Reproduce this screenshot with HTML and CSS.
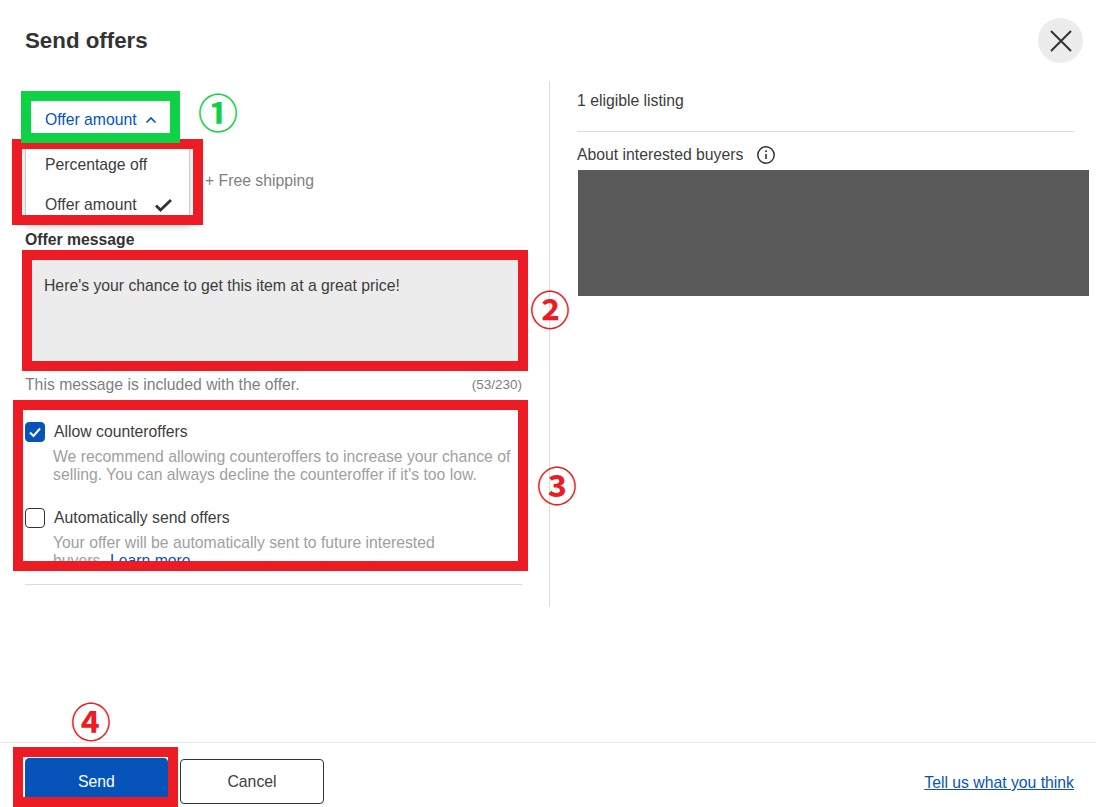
FILE: index.html
```html
<!DOCTYPE html>
<html lang="en">
<head>
<meta charset="utf-8">
<title>Send offers</title>
<link rel="stylesheet" href="styles.css">
</head>
<body>
<div class="modal">
  <header class="head">
    <h1 class="title">Send offers</h1>
    <button class="close" aria-label="Close">
      <svg width="22" height="22" viewBox="0 0 22 22"><path d="M1 1l20 20M21 1L1 21" fill="none" stroke="#333" stroke-width="2"/></svg>
    </button>
  </header>
  <main class="body">
    <section class="left">
      <button class="type-btn">Offer amount
        <svg class="chev" width="12" height="8" viewBox="0 0 12 8"><path d="M1.500 6.500L6 2l4.500 4.500" fill="none" stroke="#0654ba" stroke-width="1.600"/></svg>
      </button>
      <div class="price-row"><span class="ship">+ Free shipping</span></div>
      <label class="msg-label">Offer message</label>
      <div class="msg">Here's your chance to get this item at a great price!</div>
      <div class="msg-foot"><span>This message is included with the offer.</span><span class="count">(53/230)</span></div>
      <div class="opt">
        <span class="box on"><svg width="14" height="12" viewBox="0 0 14 12"><path d="M2 6.500l3.500 3.500L12 2.500" fill="none" stroke="#fff" stroke-width="2"/></svg></span>
        <div class="opt-text">
          <div class="opt-title">Allow counteroffers</div>
          <p class="opt-desc">We recommend allowing counteroffers to increase your chance of selling. You can always decline the counteroffer if it's too low.</p>
        </div>
      </div>
      <div class="opt">
        <span class="box"></span>
        <div class="opt-text">
          <div class="opt-title">Automatically send offers</div>
          <p class="opt-desc narrow">Your offer will be automatically sent to future interested buyers. <a class="link plain" href="#">Learn more</a></p>
        </div>
      </div>
      <hr class="rule left-rule">
    </section>
    <aside class="right">
      <div class="elig">1 eligible listing</div>
      <hr class="rule">
      <div class="about">About interested buyers
        <svg class="info" width="20" height="20" viewBox="0 0 20 20"><circle cx="10" cy="10" r="8.200" fill="none" stroke="#333" stroke-width="1.500"/><path d="M10 9v5" stroke="#333" stroke-width="1.600"/><circle cx="10" cy="6.200" r="1" fill="#333"/></svg>
      </div>
      <div class="redacted"></div>
    </aside>
  </main>
  <footer class="foot">
    <button class="btn primary">Send</button>
    <button class="btn">Cancel</button>
    <a class="link think" href="#">Tell us what you think</a>
  </footer>
</div>

<div class="menu">
  <div class="menu-item">Percentage off</div>
  <div class="menu-item">Offer amount
    <svg width="17" height="14" viewBox="0 0 17 14"><path d="M1 7.500l4.500 4.500L16 2" fill="none" stroke="#333" stroke-width="2.800"/></svg>
  </div>
</div>

<div class="frame red f-menu"></div>
<div class="frame green f-type"></div>
<div class="frame red f-msg"></div>
<div class="frame red f-opts"></div>
<div class="frame red f-send"></div>
<span class="num n1">①</span>
<span class="num n2">②</span>
<span class="num n3">③</span>
<span class="num n4">④</span>
</body>
</html>
```

FILE: styles.css
```css
* { box-sizing: border-box; }
html, body { margin: 0; height: 100%; overflow: hidden; }
body { background: #fff; color: #3d3d3d; font: 15.75px/18px "Liberation Sans", Arial, sans-serif; position: relative; }

.modal { height: 807px; display: flex; flex-direction: column; }

.head { height: 81px; flex: none; display: flex; justify-content: space-between; align-items: flex-start; padding: 18px 13px 0 25px; }
.title { margin: 10px 0 0; font-size: 22.300px; line-height: 26px; font-weight: 700; color: #333; }
.close { width: 45px; height: 45px; border: 0; border-radius: 50%; background: #ececec; padding: 0; display: flex; align-items: center; justify-content: center; }

.body { flex: none; height: 526px; display: flex; }
.left { width: 550px; flex: none; padding: 20px 0 0 25px; border-right: 1px solid #dcdcdc; }
.left > * { width: 497px; }
.right { flex: 1; padding: 10px 0 0 27px; }

.type-btn { display: flex; align-items: center; gap: 8px; height: 37px; width: auto; border: 0; background: none; padding: 0 0 0 20px; color: #0654ba; font: inherit; }
.price-row { height: 80px; padding: 27px 0 0 180px; margin-top: 7px; color: #7f7f7f; white-space: nowrap; }
.ship { display: block; }
.msg-label { display: block; margin-top: 6px; font-weight: 700; font-size: 15.750px; line-height: 18px; color: #333; }
.msg { height: 118px; margin-top: 1px; padding: 27px 19px 0; background: #ececec; }
.msg-foot { display: flex; justify-content: space-between; align-items: center; margin-top: 8px; color: #7f7f7f; line-height: 18px; }
.count { font-size: 13.500px; }

.opt { display: flex; gap: 9px; }
.msg-foot + .opt { margin-top: 28px; }
.opt + .opt { margin-top: 24px; }
.box { width: 20px; height: 20px; flex: none; border: 1px solid #333; border-radius: 4px; background: #fff; display: flex; align-items: center; justify-content: center; }
.box.on { background: #0654ba; border-color: #0654ba; }
.opt-title { line-height: 20px; }
.opt-desc { margin: 6px 0 0 -1px; color: #a0a0a0; line-height: 18px; }
.narrow { width: 420px; }
.link { color: #0654ba; }
.plain { text-decoration: none; margin-left: 1px; }

.rule { height: 1px; border: 0; margin: 0; background: #dcdcdc; }
.left-rule { margin-top: 14px; }
.right .rule { width: 497px; margin-top: 20px; }
.elig { line-height: 20px; }
.about { display: flex; align-items: center; gap: 13px; height: 20px; margin-top: 13px; }
.redacted { width: 511px; height: 126px; margin: 5px 0 0 1px; background: #595959; }

.foot { flex: none; height: 65px; margin-top: 135px; border-top: 1px solid #e8e8e8; display: flex; align-items: flex-start; gap: 12px; padding: 15px 22px 0 25px; }
.btn { width: 144px; height: 45px; border: 1px solid #333; border-radius: 4px; background: #fff; color: #3d3d3d; font: inherit; padding: 1px 0 0; margin-top: 1px; }
.btn.primary { width: 143px; border-color: #0654ba; background: #0654ba; color: #fff; margin-top: 0; padding-top: 2px; }
.think { margin-left: auto; margin-top: 16px; }

/* open dropdown over the form */
.menu { position: absolute; left: 25px; top: 143px; width: 165px; height: 81px; padding-top: 2px; background: #fff; border: 1px solid #ccc; border-width: 0 1px; box-shadow: 0 3px 6px rgba(0,0,0,.18); }
.menu-item { height: 40px; padding: 0 17px 0 19px; display: flex; justify-content: space-between; align-items: center; }

/* annotation frames */
.frame { position: absolute; border: 10px solid; pointer-events: none; }
.red { border-color: #ed1c24; }
.green { border-color: #0ed145; }
.f-type { left: 21px; top: 91px; width: 159px; height: 52px; }
.f-menu { left: 12px; top: 139px; width: 191px; height: 86px; }
.f-msg { left: 22px; top: 250px; width: 506px; height: 121px; }
.f-opts { left: 13px; top: 400px; width: 515px; height: 171px; }
.f-send { left: 13px; top: 747px; width: 165px; height: 60px; }

.num { position: absolute; width: 40px; height: 40px; font: 700 40px/40px "Noto Sans CJK JP", sans-serif; text-align: center; color: #ed1c24; }
.n1 { left: 198px; top: 91px; color: #0ed145; }
.n2 { left: 530px; top: 288px; }
.n3 { left: 537px; top: 464px; }
.n4 { left: 71px; top: 700px; }
```
